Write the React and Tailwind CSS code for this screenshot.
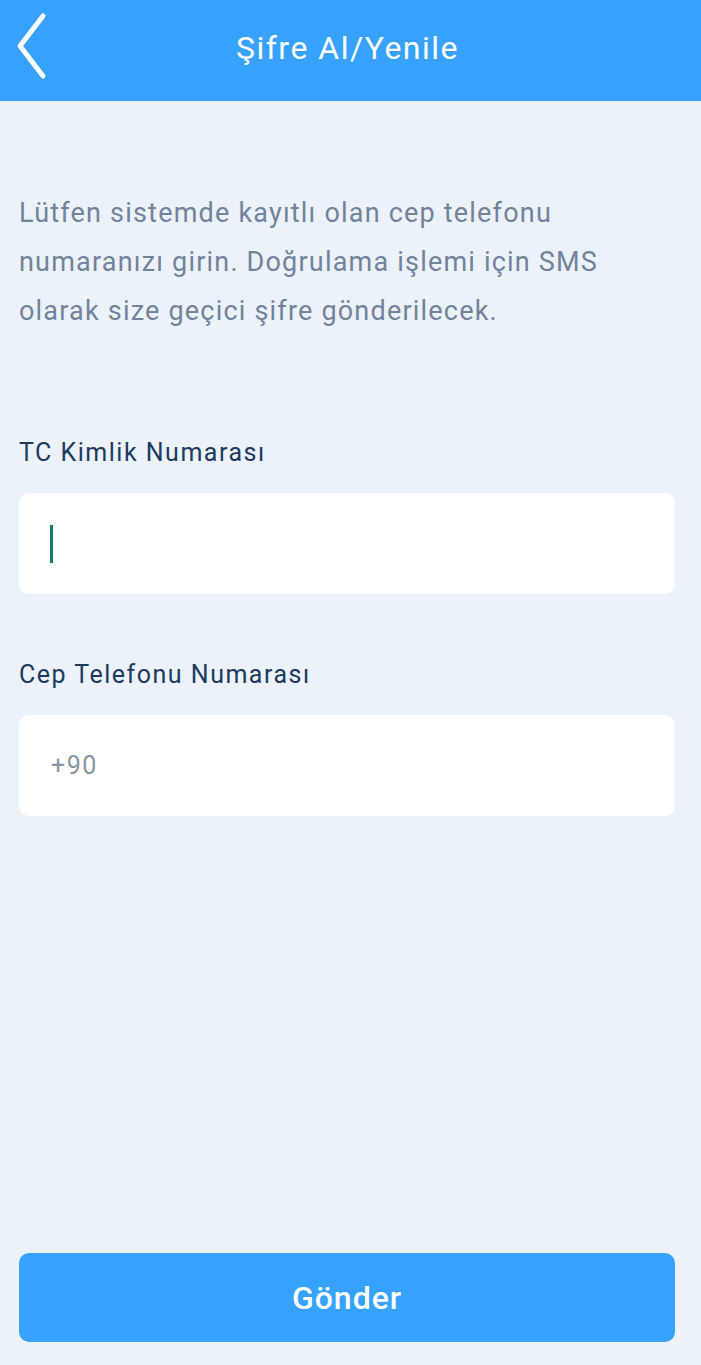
export default function App() {
  return (
    <div
      className="min-h-[1365px] w-full flex flex-col bg-[#ebf2f9]"
      style={{ fontFamily: "Roboto, 'Noto Sans', sans-serif" }}
    >
      <header className="h-[101px] bg-[#36a2fd] flex items-center relative">
        <button className="absolute left-0 top-0 w-[60px] h-[90px]">
          <svg width="60" height="90" viewBox="0 0 60 90" fill="none">
            <path
              d="M43 16 L20 46 L43 76"
              stroke="white"
              strokeWidth="5"
              strokeLinecap="round"
              strokeLinejoin="round"
            />
          </svg>
        </button>
        <h1 className="w-full text-center text-white text-[32px] leading-none tracking-[1.5px] pb-[6px] pr-[6px]">
          Şifre Al/Yenile
        </h1>
      </header>

      <main className="flex-1 flex flex-col pl-[19px] pr-[26px]">
        <p className="mt-[88px] text-[27px] leading-[49px] tracking-[1.2px] text-[#71839a]">
          Lütfen sistemde kayıtlı olan cep telefonu numaranızı girin. Doğrulama
          işlemi için SMS olarak size geçici şifre gönderilecek.
        </p>

        <label className="mt-[102px] text-[25px] leading-[30px] tracking-[1.5px] text-[#1b3a5e]">
          TC Kimlik Numarası
        </label>
        <div className="mt-[25px] h-[101px] bg-white rounded-[10px] flex items-center pl-[31px]">
          <span className="w-[3px] h-[38px] bg-[#0e7c6b]" />
        </div>

        <label className="mt-[66px] text-[25px] leading-[30px] tracking-[1.5px] text-[#1b3a5e]">
          Cep Telefonu Numarası
        </label>
        <div className="mt-[25px] h-[101px] bg-white rounded-[10px] flex items-center pl-[32px]">
          <span className="text-[25px] tracking-[1.5px] text-[#8796a6]">+90</span>
        </div>

        <button className="mt-auto mb-[23px] h-[89px] bg-[#36a2fd] rounded-[10px] text-white text-[32px] tracking-[1px] font-medium">
          Gönder
        </button>
      </main>
    </div>
  );
}
